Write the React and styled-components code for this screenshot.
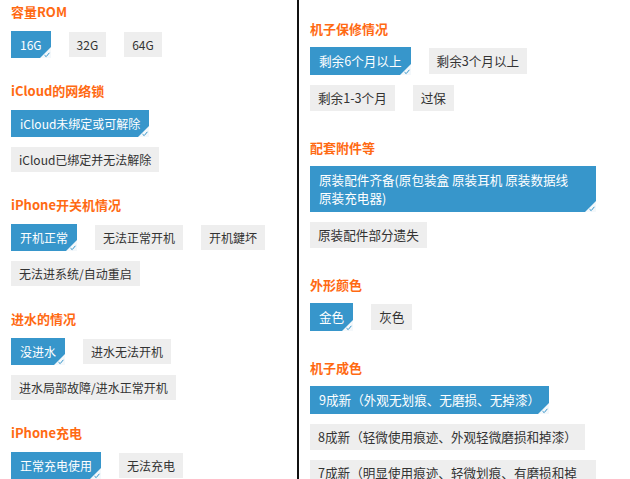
import React from 'react';
import styled, { createGlobalStyle } from 'styled-components';

const GlobalStyle = createGlobalStyle`
  html, body {
    margin: 0;
    padding: 0;
    background: #fff;
  }
  body {
    font-family: "Microsoft YaHei", "Noto Sans CJK SC", "Noto Sans", sans-serif;
    color: #333;
  }
`;

const Page = styled.div`
  display: flex;
  width: 630px;
  height: 479px;
  overflow: hidden;
`;

const Column = styled.div`
  width: 286px;
  flex-shrink: 0;
  padding: ${(p) => (p.$right ? '19px 0 0 11px' : '2px 0 0 11px')};
  border-right: ${(p) => (p.$right ? 'none' : '2px solid #111')};
`;

const Section = styled.div`
  margin-bottom: ${(p) => (p.$right ? '27px' : '23px')};
`;

const Title = styled.h3`
  margin: 0 0 ${(p) => (p.$right ? '8px' : '9px')};
  font-size: 13px;
  line-height: 20px;
  font-weight: bold;
  color: #ff6a13;
`;

const Options = styled.div`
  display: flex;
  flex-wrap: wrap;
  align-items: center;
  gap: 10px 18px;
`;

const Option = styled.span`
  position: relative;
  display: inline-block;
  font-size: ${(p) => (p.$right ? '12.6px' : '12px')};
  line-height: ${(p) => (p.$right ? '18px' : '17px')};
  padding: ${(p) => (p.$active ? '5px 9px' : '4px 8px')};
  background: ${(p) => (p.$active ? '#3796cb' : '#eeeeee')};
  color: ${(p) => (p.$active ? '#fff' : '#333')};
  word-break: ${(p) => (p.$keep ? 'keep-all' : 'normal')};
  cursor: pointer;
`;

const Corner = styled.svg`
  position: absolute;
  right: 0;
  bottom: 0;
  width: 12px;
  height: 12px;
`;

const Check = () => (
  <Corner viewBox="0 0 12 12">
    <polygon points="12,1 12,12 1,12" fill="#f4f8fb" />
    <path d="M5.5 9.2 L7.2 10.6 L10.4 6.8" fill="none" stroke="#3796cb" strokeWidth="1" />
  </Corner>
);

const left = [
  { title: '容量ROM', items: ['16G', '32G', '64G'] },
  { title: 'iCloud的网络锁', items: ['iCloud未绑定或可解除', 'iCloud已绑定并无法解除'] },
  { title: 'iPhone开关机情况', items: ['开机正常', '无法正常开机', '开机鍵坏', '无法进系统/自动重启'] },
  { title: '进水的情况', items: ['没进水', '进水无法开机', '进水局部故障/进水正常开机'] },
  { title: 'iPhone充电', items: ['正常充电使用', '无法充电'] },
];

const right = [
  { title: '机子保修情况', items: ['剩余6个月以上', '剩余3个月以上', '剩余1-3个月', '过保'] },
  {
    title: '配套附件等',
    keep: true,
    items: ['原装配件齐备(原包装盒 原装耳机 原装数据线 原装充电器)', '原装配件部分遗失'],
  },
  { title: '外形颜色', items: ['金色', '灰色'] },
  {
    title: '机子成色',
    items: [
      '9成新（外观无划痕、无磨损、无掉漆）',
      '8成新（轻微使用痕迹、外观轻微磨损和掉漆）',
      '7成新（明显使用痕迹、轻微划痕、有磨损和掉漆）',
    ],
  },
];

const Group = ({ title, items, keep, $right }) => (
  <Section $right={$right}>
    <Title $right={$right}>{title}</Title>
    <Options>
      {items.map((item, i) => (
        <Option key={item} $active={i === 0} $right={$right} $keep={keep}>
          {item}
          {i === 0 && <Check />}
        </Option>
      ))}
    </Options>
  </Section>
);

const App = () => (
  <Page>
    <GlobalStyle />
    <Column>
      {left.map((g) => (
        <Group key={g.title} {...g} />
      ))}
    </Column>
    <Column $right>
      {right.map((g) => (
        <Group key={g.title} {...g} $right />
      ))}
    </Column>
  </Page>
);

export default App;
